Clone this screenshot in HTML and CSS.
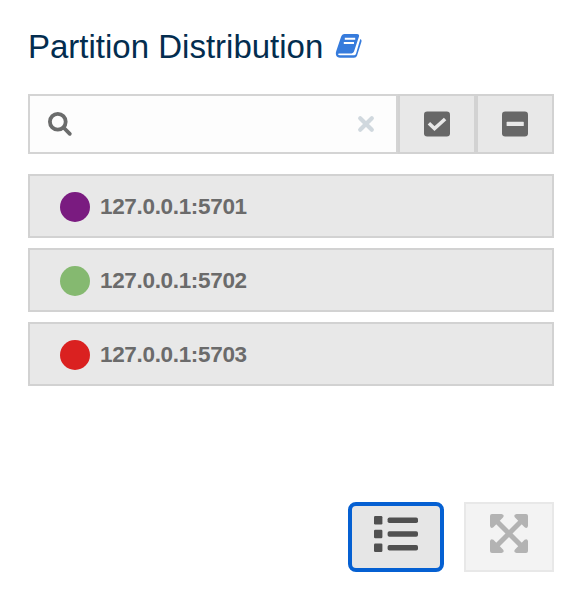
FILE: index.html
```html
<!DOCTYPE html>
<html lang="en">
<head>
<meta charset="utf-8">
<title>Partition Distribution</title>
<link rel="stylesheet" href="styles.css">
</head>
<body>
<main class="panel">
  <header class="heading">
    <h1 class="title">Partition Distribution</h1>
    <svg class="book" width="28" height="26" viewBox="0 0 28 26">
      <path fill="#367bdc" d="M9.5 1H22Q24.6 1 24 3.6L19 18.6Q18.4 20.4 16.6 20.4H4.4Q2.7 20.5 3.1 21.6Q3.5 22.3 5 22.3H19Q20.4 22.3 21 20.7L25.3 6Q27 6.8 26.5 8.6L22 22.7Q21.3 24.8 19 24.8H5Q2 24.8 1 22Q.4 20.5 1.2 18.3L6 4Q7 1 9.5 1Z"/>
      <path stroke="#fff" stroke-width="2" d="M9.8 5.8H20.2M8.8 9.9H19"/>
    </svg>
  </header>

  <div class="toolbar">
    <div class="search">
      <svg width="26" height="26" viewBox="0 0 26 26" fill="none" stroke="#6b6c6c" stroke-width="3.8">
        <circle cx="10.8" cy="10.8" r="7.9"/>
        <path stroke-linecap="round" d="M17 17L22.8 22.8"/>
      </svg>
      <svg width="18" height="18" viewBox="0 0 18 18" stroke="#d0d8de" stroke-width="4.2" stroke-linecap="round">
        <path d="M3.2 3.2L14.8 14.8M14.8 3.2L3.2 14.8"/>
      </svg>
    </div>
    <div class="tool">
      <svg width="26" height="26" viewBox="0 0 26 26" fill="none">
        <rect y=".5" width="26" height="25" rx="3.2" fill="#676767"/>
        <path stroke="#e8e8e8" stroke-width="3.6" d="M4.9 12.3L10.5 17.5L21.1 8"/>
      </svg>
    </div>
    <div class="tool">
      <svg width="26" height="26" viewBox="0 0 26 26">
        <rect y=".5" width="26" height="25" rx="3.2" fill="#676767"/>
        <rect x="4.6" y="10.8" width="17.2" height="4.3" rx=".6" fill="#e8e8e8"/>
      </svg>
    </div>
  </div>

  <ul class="members">
    <li class="member"><span class="dot purple"></span>127.0.0.1:5701</li>
    <li class="member"><span class="dot green"></span>127.0.0.1:5702</li>
    <li class="member"><span class="dot red"></span>127.0.0.1:5703</li>
  </ul>

  <footer class="views">
    <div class="view active">
      <svg width="44" height="36" viewBox="0 0 44 36" fill="#505050">
        <rect y="0" width="8.4" height="8.4" rx="1.2"/>
        <rect y="13.8" width="8.4" height="8.4" rx="1.2"/>
        <rect y="27.6" width="8.4" height="8.4" rx="1.2"/>
        <rect x="13.6" y="1.4" width="30.4" height="5.6" rx="1.8"/>
        <rect x="13.6" y="15.2" width="30.4" height="5.6" rx="1.8"/>
        <rect x="13.6" y="29" width="30.4" height="5.6" rx="1.8"/>
      </svg>
    </div>
    <div class="view expand">
      <svg width="38" height="39" viewBox="0 0 38 39" fill="#b3b3b3">
        <path stroke="#b3b3b3" stroke-width="5" d="M6 6.5L32 32.5M32 6.5L6 32.5"/>
        <path d="M2 0H11.5Q15 .8 13 3.4L3.4 13.2Q.8 15 0 12V2Q0 0 2 0ZM36 0H26.5Q23 .8 25 3.4L34.6 13.2Q37.2 15 38 12V2Q38 0 36 0ZM2 39H11.5Q15 38.2 13 35.6L3.4 25.8Q.8 24 0 27V37Q0 39 2 39ZM36 39H26.5Q23 38.2 25 35.6L34.6 25.8Q37.2 24 38 27V37Q38 39 36 39Z"/>
      </svg>
    </div>
  </footer>
</main>
</body>
</html>
```
FILE: styles.css
```css
* { box-sizing: border-box; }

body {
  margin: 0;
  background: #fff;
  font-family: "Liberation Sans", Arial, sans-serif;
}

svg { display: block; flex: none; }

.panel {
  display: flex;
  flex-direction: column;
  width: 584px;
  height: 596px;
  padding: 28px 30px 24px 28px;
}

.heading {
  display: flex;
  align-items: flex-start;
  height: 66px;
}

.title {
  width: 307px;
  margin: 0;
  color: #032d4f;
  font-size: 33px;
  font-weight: 400;
  line-height: 38px;
  white-space: nowrap;
}

.book { margin-top: 5px; }

.toolbar {
  display: flex;
  height: 60px;
}

.search {
  display: flex;
  align-items: center;
  justify-content: space-between;
  width: 370px;
  padding: 0 21px 0 17px;
  border: 2px solid #d4d4d4;
  background: #fdfdfd;
}

.tool {
  display: flex;
  align-items: center;
  justify-content: center;
  width: 78px;
  border: 2px solid #d2d2d2;
  background: #e8e8e8;
}

.members {
  display: grid;
  gap: 10px;
  margin: 20px 0 0;
  padding: 0;
  list-style: none;
}

.member {
  display: flex;
  align-items: center;
  gap: 10px;
  height: 64px;
  padding: 1px 30px 0;
  border: 2px solid #d2d2d2;
  background: #e8e8e8;
  color: #6b6b6b;
  font-size: 22.5px;
  font-weight: 700;
  letter-spacing: -0.33px;
}

.dot {
  width: 30px;
  height: 30px;
  border-radius: 50%;
}

.purple { background: #7a1b80; }
.green { background: #85b970; }
.red { background: #da2120; }

.views {
  display: flex;
  justify-content: flex-end;
  gap: 20px;
  margin-top: auto;
}

.view {
  display: flex;
  justify-content: center;
  height: 70px;
}

.active {
  width: 96px;
  padding-top: 10px;
  border: 4px solid #0560d2;
  border-radius: 8px;
  background: #e6e6e6;
}

.expand {
  width: 90px;
  padding-top: 10px;
  border: 2px solid #e8e8e8;
  background: #f3f3f3;
}
```
